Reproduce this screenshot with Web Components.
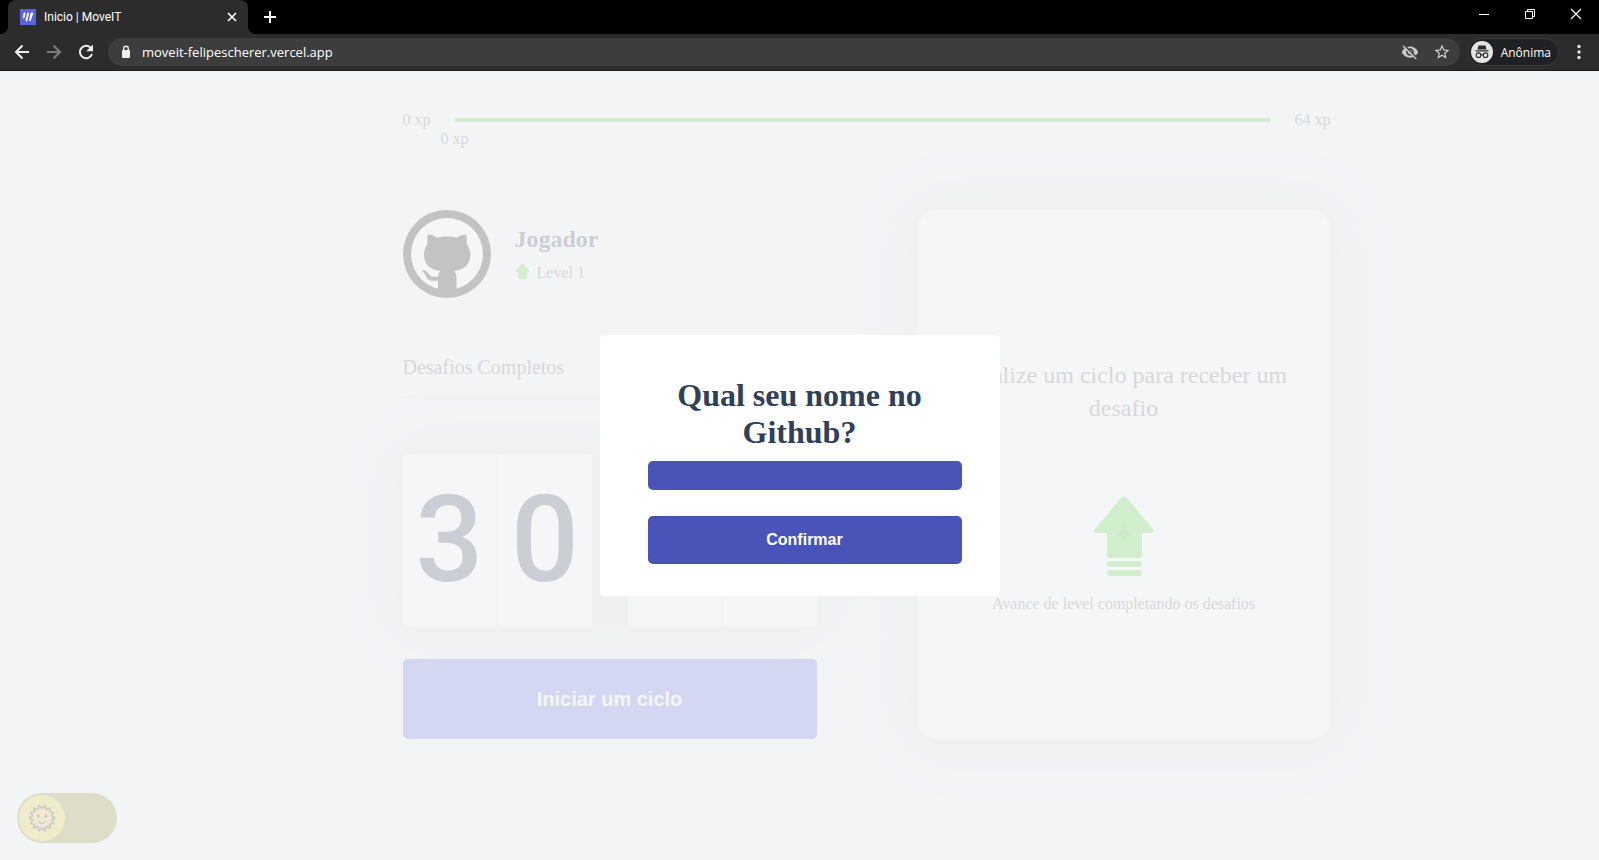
<!DOCTYPE html>
<html lang="pt-BR">
<head>
<meta charset="utf-8">
<title>Inicio | MoveIT</title>
<style>
html, body { margin: 0; height: 100%; }
body { background: #f2f4f6; font-family: "Liberation Serif", serif; font-size: 16px; color: #666; }
</style>
</head>
<body>
<browser-window>
  <browser-tabs slot="chrome" label="Inicio | MoveIT"></browser-tabs>
  <browser-toolbar slot="chrome" url="moveit-felipescherer.vercel.app"></browser-toolbar>
  <moveit-app></moveit-app>
  <name-modal slot="modal"></name-modal>
</browser-window>
<script>
function define(name, html) {
  customElements.define(name, class extends HTMLElement {
    constructor() {
      super();
      const t = document.createElement('template');
      t.innerHTML = '<style>:host,*{box-sizing:border-box}button,input{font:inherit;border:0;margin:0;padding:0}button{background:none;color:inherit;cursor:pointer}svg{display:block}</style>' + html;
      this.attachShadow({ mode: 'open' }).append(t.content.cloneNode(true));
    }
    connectedCallback() {
      for (const n of this.shadowRoot.querySelectorAll('[data-from]')) {
        const v = this.getAttribute(n.dataset.from) || '';
        if (n.tagName === 'INPUT') n.value = v; else n.textContent = v;
      }
    }
  });
}

define('browser-window', `
<style>
:host { display: flex; flex-direction: column; height: 100vh; min-height: 780px; }
main { flex: 1; position: relative; display: flex; overflow: hidden; }
.overlay { position: absolute; inset: 0; display: flex; align-items: center; justify-content: center; background: rgba(242,244,246,.8); }
</style>
<slot name="chrome"></slot>
<main><slot></slot><div class="overlay"><slot name="modal"></slot></div></main>`);

define('browser-tabs', `
<style>
:host { display: flex; height: 34px; background: #000; color: #fff; font: 12px Roboto, sans-serif; padding-left: 8px; }
.tab { width: 240px; background: #2c2c2c; border-radius: 8px 8px 0 0; display: flex; align-items: center; padding: 0 11px 0 12px; position: relative; }
.tab::before, .tab::after { content: ""; position: absolute; bottom: 0; width: 8px; height: 8px; }
.tab::before { left: -8px; background: radial-gradient(circle at 0 0, transparent 8px, #2c2c2c 8px); }
.tab::after { right: -8px; background: radial-gradient(circle at 100% 0, transparent 8px, #2c2c2c 8px); }
.title { flex: 1; margin-left: 8px; }
.new { margin-left: 14px; }
.win { margin-left: auto; display: flex; }
.win button { width: 46px; height: 28px; display: grid; place-items: center; }
</style>
<div class="tab">
<svg width="16" height="16" viewBox="0 0 16 16"><path fill="#5965e0" d="M0 0h16v16H0z"/><g stroke="#fff" stroke-width="1.900" stroke-linecap="round"><path d="M4.500 4.500 3.700 8.500M8 4.500 6.500 11.500M12.200 4.500 10 11M11.500 4.500 10.500 8"/></g></svg>
<span class="title" data-from="label"></span>
<button aria-label="Fechar guia"><svg width="10" height="10" viewBox="0 0 10 10" stroke="#fff" stroke-width="1.600"><path d="M1 1l8 8M9 1 1 9"/></svg></button>
</div>
<button class="new" aria-label="Nova guia"><svg width="16" height="16" viewBox="0 0 16 16" stroke="#fff" stroke-width="2"><path d="M8 2v12M2 8h12"/></svg></button>
<div class="win">
<button aria-label="Minimizar"><svg width="12" height="12" stroke="#fff"><path d="M1 6.500h10"/></svg></button>
<button aria-label="Restaurar"><svg width="12" height="12" fill="none" stroke="#fff"><path d="M1.500 3.500h7v7h-7zM3.500 3V1.500h7v7H9"/></svg></button>
<button aria-label="Fechar"><svg width="12" height="12" stroke="#fff" stroke-width="1.200"><path d="M1 1l10 10M11 1 1 11"/></svg></button>
</div>`);

define('browser-toolbar', `
<style>
:host { display: flex; align-items: center; height: 37px; background: #2c2c2c; border-bottom: 1px solid #1d1d1d; color: #fff; font: 13px "Open Sans", sans-serif; padding: 0 10px 0 12px; }
nav { display: flex; gap: 12px; }
.url { flex: 1; display: flex; align-items: center; gap: 11px; height: 28px; margin-left: 12px; padding: 0 9px 0 13px; border-radius: 14px; background: #3d3d3d; }
.url input { flex: 1; background: none; color: inherit; outline: 0; }
.url button + button { margin-left: 3px; }
.user { display: flex; align-items: center; gap: 8px; height: 28px; margin: 0 10px 0 8px; padding: 0 7px 0 2px; border-radius: 14px; background: #202124; border: 1px solid #38393b; font-size: 12px; }
</style>
<nav>
<button aria-label="Voltar"><svg width="20" height="20" fill="none" stroke="#eee" stroke-width="2"><path d="M17 10H4M10.500 3.500 4 10l6.500 6.500"/></svg></button>
<button aria-label="Avançar"><svg width="20" height="20" fill="none" stroke="#7d7d7d" stroke-width="2"><path d="M3 10h13M9.500 3.500 16 10l-6.500 6.500"/></svg></button>
<button aria-label="Recarregar"><svg width="20" height="20" viewBox="0 0 20 20"><path fill="none" stroke="#eee" stroke-width="2" d="M15 6.200A6.200 6.200 0 1 0 16 12"/><path fill="#eee" d="M17 2.500v6.800h-6.800z"/></svg></button>
</nav>
<div class="url">
<svg width="10" height="14" viewBox="0 0 10 14"><rect x="1" y="5" width="8" height="8" rx="1" fill="#eee"/><path fill="none" stroke="#eee" stroke-width="1.400" d="M2.700 5V3.500a2.300 2.300 0 0 1 4.600 0V5"/></svg>
<input aria-label="Endereço" data-from="url">
<button aria-label="Cookies bloqueados"><svg width="18" height="18" viewBox="0 0 24 24" fill="#c8c8c8"><path d="M12 7c2.760 0 5 2.240 5 5 0 .650-.130 1.260-.360 1.830l2.920 2.920c1.510-1.260 2.700-2.890 3.430-4.750-1.730-4.390-6-7.500-11-7.500-1.400 0-2.740.250-3.980.700l2.160 2.160C10.740 7.130 11.350 7 12 7zM2 4.270l2.280 2.280.460.460C3.080 8.300 1.780 10.020 1 12c1.730 4.390 6 7.500 11 7.500 1.550 0 3.030-.300 4.380-.840l.420.420L19.730 22 21 20.730 3.270 3 2 4.270zM7.530 9.800l1.550 1.550c-.050.210-.080.430-.080.650 0 1.660 1.340 3 3 3 .220 0 .440-.030.650-.080l1.550 1.550c-.670.330-1.410.530-2.200.530-2.760 0-5-2.240-5-5 0-.790.200-1.530.530-2.200zm4.310-.780 3.150 3.150.020-.160c0-1.660-1.340-3-3-3l-.170.010z"/></svg></button>
<button aria-label="Favoritar"><svg width="18" height="18" viewBox="0 0 24 24" fill="#d0d0d0"><path d="M22 9.240l-7.190-.620L12 2 9.190 8.630 2 9.240l5.460 4.730L5.820 21 12 17.270 18.180 21l-1.630-7.030L22 9.240zM12 15.400l-3.760 2.270 1-4.280-3.320-2.880 4.380-.380L12 6.100l1.710 4.040 4.380.380-3.320 2.880 1 4.280L12 15.400z"/></svg></button>
</div>
<button class="user"><svg width="22" height="22" viewBox="0 0 22 22"><circle cx="11" cy="11" r="11" fill="#e4e4e4"/><path fill="#2c2c2c" d="M7.500 4.500h7l1 4h-9zM4.500 9.200h13v1.300h-13z"/><g fill="none" stroke="#2c2c2c" stroke-width="1.100"><circle cx="7.500" cy="14.200" r="2.300"/><circle cx="14.500" cy="14.200" r="2.300"/><path d="M9.800 14q1.200-.800 2.400 0"/></g></svg><span>Anônima</span></button>
<button aria-label="Menu"><svg width="20" height="20" fill="#e4e4e4"><circle cx="10" cy="4.500" r="1.700"/><circle cx="10" cy="10" r="1.700"/><circle cx="10" cy="15.500" r="1.700"/></svg></button>`);

define('moveit-app', `
<style>
:host { flex: 1; display: flex; }
aside { display: flex; flex-direction: column; justify-content: flex-end; padding: 0 17px 17px; }
.container { width: 100%; max-width: 992px; margin: 0 auto; padding: 40px 32px; display: flex; flex-direction: column; gap: 81px; }
section { display: grid; grid-template-columns: 1fr 1fr; gap: 100px; }
.left { display: flex; flex-direction: column; }
</style>
<aside><theme-toggle></theme-toggle></aside>
<div class="container">
<xp-bar></xp-bar>
<section>
<div class="left"><player-profile name="Jogador" level="Level 1"></player-profile><completed-challenges></completed-challenges><cycle-countdown></cycle-countdown></div>
<challenge-box></challenge-box>
</section>
</div>`);

// Sun outline: 14 rays, alternating outer and inner radius.
const rays = Array.from({ length: 28 }, (_, i) => {
  const r = i % 2 ? 9.5 : 13, a = (i + 1) * Math.PI / 14;
  return (r * Math.sin(a)).toFixed(2) + ',' + (-r * Math.cos(a)).toFixed(2);
}).join(' ');

define('theme-toggle', `
<style>
:host { display: block; }
label { position: relative; display: flex; width: 100px; height: 50px; padding: 2px; border-radius: 25px; background: #898214; }
input { position: absolute; inset: 0; opacity: 0; }
.knob { width: 46px; height: 46px; border-radius: 50%; background: #dfcf18; display: grid; place-items: center; }
</style>
<label><input type="checkbox" aria-label="Tema escuro"><span class="knob"><svg width="30" height="30" viewBox="-15 -15 30 30" stroke="#222" fill="none"><polygon stroke-width="1.500" stroke-linejoin="round" fill="#f0b848" points="${rays}"/><path stroke-width="2.400" stroke-linecap="round" d="M-3.800-2.500v1M3.800-2.500v1"/><path stroke-width="1.500" stroke-linecap="round" d="M-3 4q3 2.500 6 0"/></svg></span></label>`);

define('xp-bar', `
<style>
:host { display: flex; align-items: center; gap: 24px; line-height: 18px; }
.bar { flex: 1; height: 4px; border-radius: 4px; background: #4cd62b; position: relative; }
.now { position: absolute; left: 0; top: 12px; transform: translateX(-50%); white-space: nowrap; }
</style>
<span>0 xp</span><div class="bar"><span class="now">0 xp</span></div><span>64 xp</span>`);

define('player-profile', `
<style>
:host { display: flex; align-items: center; gap: 24px; }
strong { display: block; font-size: 24px; line-height: 28px; color: #2e384d; }
p { display: flex; align-items: center; gap: 7px; margin: 9px 0 0; line-height: 18px; }
</style>
<svg width="88" height="88" viewBox="0 0 88 88"><circle cx="44" cy="44" r="44" fill="#000"/><circle cx="44" cy="44" r="36" fill="#fff"/><path d="M25 24.500c2.500-.500 6.500 1.500 9.500 3.300 6-1.600 13-1.600 19 0 3-1.800 7-3.800 9.500-3.300 1 3 1.200 6 .500 9.500 2.500 3 3.800 6.500 3.800 10.500 0 10-5.500 15-16 16.500 1.500 1.500 2.200 4 2.200 6.500V84a44 44 0 0 1-18.500 0V70.500c-5 1-9.500.500-11.500-3-1.500-3.500-3-6-5.500-7.500 4-.500 6 1.500 8 4.500 2 2.500 5 2.500 9 2 .200-2.500 1-4 2.500-5.500C27 59.500 21 54.500 21 44.500c0-4 1.500-7.500 3.500-10.500-.500-3.500-.500-6.500.500-9.500z"/></svg>
<div><strong data-from="name"></strong><p><svg width="15" height="22" fill="#4cd62b"><path d="M7.500 1 15 10h-3v7H3.500v-7H0z"/></svg><span data-from="level"></span></p></div>`);

define('completed-challenges', `
<style>
:host { display: flex; justify-content: space-between; align-items: center; margin: 56px 0; padding-bottom: 16px; border-bottom: 1px solid #d7d8da; font-size: 20px; line-height: 27px; }
b { font-size: 24px; font-weight: 500; }
</style>
<span>Desafios Completos</span><b>0</b>`);

define('cycle-countdown', `
<style>
:host { display: block; }
.time { display: flex; border-radius: 20px; box-shadow: 0 0 60px 24px rgba(110,70,70,.1); color: #2e384d; font: 500 120px/172px Roboto, sans-serif; }
.pair { flex: 1; display: flex; min-height: 173px; background: #fff; border-radius: 5px; text-align: center; }
.pair span { flex: 1; }
.pair span:first-child { border-right: 2px solid #f0f1f3; }
.colon { width: 36px; background: rgba(110,70,70,.1); }
button { display: block; position: relative; width: 100%; height: 80px; margin-top: 32px; border-radius: 5px; background: #5965e0; color: #fff; font: bold 20px "Liberation Sans", sans-serif; }
</style>
<div class="time"><div class="pair"><span>3</span><span>0</span></div><span class="colon"></span><div class="pair"><span></span><span></span></div></div>
<button>Iniciar um ciclo</button>`);

define('challenge-box', `
<style>
:host { display: flex; flex-direction: column; align-items: center; justify-content: center; padding: 47px 32px 24px; border-radius: 20px; background: #fff; box-shadow: 0 0 60px 24px rgba(110,70,70,.1); text-align: center; }
strong { font-size: 24px; font-weight: 500; line-height: 33px; }
svg { margin: 71px 0 17px; }
p { margin: 0; line-height: 20px; }
</style>
<strong>Finalize um ciclo para receber um desafio</strong>
<svg width="60" height="81" viewBox="0 0 60 81" fill="#4cd62b"><path d="M27.500 1.500q2.500-2.500 5 0L59 33q1.500 4-2.500 4H48v23q0 2-2 2H15q-2 0-2-2V37H3.500q-4 0-2.500-4z"/><rect x="13" y="65" width="35" height="6" rx="3"/><rect x="13" y="74" width="35" height="6" rx="3"/><path stroke="#44bf2a" stroke-width="5" stroke-linecap="round" d="M30 31v12M24 37h12"/></svg>
<p>Avance de level completando os desafios</p>`);

define('name-modal', `
<style>
:host { display: block; width: 400px; padding: 42px 48px 32px; border-radius: 5px; background: #fff; }
label { display: block; margin-bottom: 10px; font-size: 32px; font-weight: bold; line-height: 37px; text-align: center; color: #2f405a; }
input, button { display: block; width: calc(100% + 10px); border-radius: 5px; background: #4953b8; color: #fff; }
input { height: 29px; padding: 0 8px; }
button { height: 48px; margin-top: 26px; font: bold 16px "Liberation Sans", sans-serif; }
</style>
<form><label for="n">Qual seu nome no Github?</label><input id="n" type="text"><button type="button">Confirmar</button></form>`);
</script>
</body>
</html>
